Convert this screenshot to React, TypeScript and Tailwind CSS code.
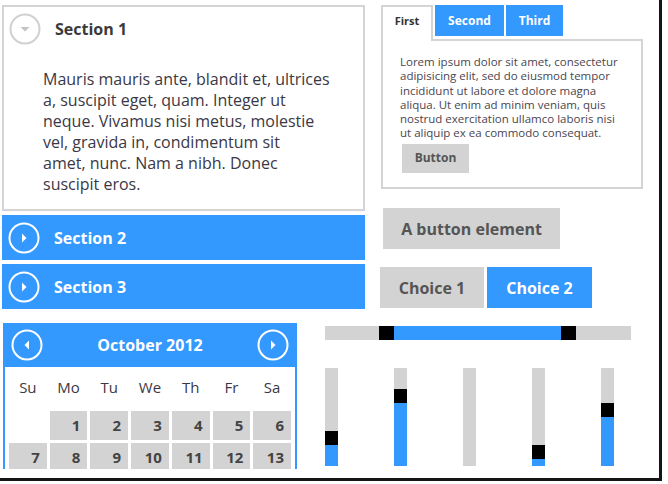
import React from 'react';

const BLUE = 'bg-[#3399ff]';

// small circle with a triangle, used by accordion headers and calendar nav
const CircleArrow = ({ dir, light }: { dir: 'down' | 'right' | 'left'; light?: boolean }) => {
  const stroke = light ? '#ffffff' : '#d0d0d0';
  const fill = light ? '#ffffff' : '#c4c4c4';
  const tri =
    dir === 'down' ? '11.5,14 20.5,14 16,18.5' : dir === 'right' ? '14,11.5 14,20.5 18.5,16' : '18,11.5 18,20.5 13.5,16';
  return (
    <svg width="32" height="32" viewBox="0 0 32 32" className="shrink-0">
      <circle cx="16" cy="16" r="14.5" fill="none" stroke={stroke} strokeWidth="2" />
      <polygon points={tri} fill={fill} />
    </svg>
  );
};

const VSlider = ({ value }: { value: number | null }) => (
  <div className="relative w-[13px] h-[98px] bg-[#d3d3d3]">
    {value !== null && (
      <>
        <div className={`absolute left-0 right-0 bottom-0 ${BLUE}`} style={{ height: value }} />
        <div className="absolute left-0 right-0 h-[14px] bg-black" style={{ bottom: value }} />
      </>
    )}
  </div>
);

const days = ['Su', 'Mo', 'Tu', 'We', 'Th', 'Fr', 'Sa'];
const dates: (number | null)[] = [null, 1, 2, 3, 4, 5, 6, 7, 8, 9, 10, 11, 12, 13];

const sectionLines = [
  'Mauris mauris ante, blandit et, ultrices',
  'a, suscipit eget, quam. Integer ut',
  'neque. Vivamus nisi metus, molestie',
  'vel, gravida in, condimentum sit',
  'amet, nunc. Nam a nibh. Donec',
  'suscipit eros.',
];

const tabLines = [
  'Lorem ipsum dolor sit amet, consectetur',
  'adipisicing elit, sed do eiusmod tempor',
  'incididunt ut labore et dolore magna',
  'aliqua. Ut enim ad minim veniam, quis',
  'nostrud exercitation ullamco laboris nisi',
  'ut aliquip ex ea commodo consequat.',
];

export default function App() {
  return (
    <div
      className="w-[662px] h-[481px] bg-white border-r-[3px] border-b-[3px] border-[#151515] overflow-hidden text-[#3b3845]"
      style={{ fontFamily: '"Open Sans", "Liberation Sans", sans-serif' }}
    >
      {/* top row */}
      <div className="flex pt-[5px]">
        {/* accordion */}
        <div className="ml-[2px] w-[363px] flex flex-col gap-[4px]">
          <div className="h-[206px] border-2 border-[#d4d4d4]">
            <div className="flex items-center h-[43px] pl-[5px] gap-[14px]">
              <CircleArrow dir="down" />
              <span className="font-bold text-[16px] text-[#3a3a3a]">Section 1</span>
            </div>
            <p className="pl-[39px] pt-[19px] text-[16px] leading-[21px] whitespace-nowrap">
              {sectionLines.map((l, i) => (
                <React.Fragment key={i}>
                  {l}
                  {i < sectionLines.length - 1 && <br />}
                </React.Fragment>
              ))}
            </p>
          </div>
          {['Section 2', 'Section 3'].map((s) => (
            <div key={s} className={`h-[45px] ${BLUE} flex items-center pl-[6px] gap-[14px]`}>
              <CircleArrow dir="right" light />
              <span className="font-bold text-[16px] text-white">{s}</span>
            </div>
          ))}
        </div>

        {/* right column */}
        <div className="ml-[15px] flex flex-col">
          <div className="ml-[1px] w-[262px]">
            <div className="flex items-start gap-[2px]">
              <div className="w-[52px] h-[36px] border-2 border-b-0 border-[#d4d4d4] bg-white relative z-10 flex items-center justify-center text-[11px] font-bold text-[#333] pb-[5px]">
                First
              </div>
              <div className={`w-[69px] h-[31px] ${BLUE} flex items-center justify-center text-[12px] font-bold text-white`}>
                Second
              </div>
              <div className={`w-[57px] h-[31px] ${BLUE} flex items-center justify-center text-[12px] font-bold text-white`}>
                Third
              </div>
            </div>
            <div className="-mt-[2px] h-[150px] border-2 border-[#d4d4d4] pl-[17px] pt-[14px]">
              <p className="text-[11.5px] leading-[14.3px] text-[#4a4550] whitespace-nowrap">
                {tabLines.map((l, i) => (
                  <React.Fragment key={i}>
                    {l}
                    {i < tabLines.length - 1 && <br />}
                  </React.Fragment>
                ))}
              </p>
              <div className="mt-[3px] ml-[2px] w-[67px] h-[29px] bg-[#d3d3d3] flex items-center justify-center text-[12px] font-bold text-[#555]">
                Button
              </div>
            </div>
          </div>
          <div className="mt-[19px] ml-[3px] w-[177px] h-[41px] bg-[#d3d3d3] flex items-center justify-center text-[16px] font-bold text-[#555]">
            A button element
          </div>
          <div className="mt-[18px] flex gap-[3px]">
            <div className="w-[104px] h-[41px] bg-[#d3d3d3] flex items-center justify-center text-[16px] font-bold text-[#555]">
              Choice 1
            </div>
            <div className={`w-[105px] h-[41px] ${BLUE} flex items-center justify-center text-[16px] font-bold text-white`}>
              Choice 2
            </div>
          </div>
        </div>
      </div>

      {/* bottom row */}
      <div className="flex mt-[14px]">
        {/* calendar */}
        <div className="ml-[3px] w-[294px] h-[146px] border-x-2 border-[#3399ff] overflow-hidden">
          <div className={`h-[44px] ${BLUE} flex items-center justify-between px-[6px]`}>
            <CircleArrow dir="left" light />
            <span className="font-bold text-[16px] text-white">October 2012</span>
            <CircleArrow dir="right" light />
          </div>
          <div className="grid grid-cols-7 gap-x-[3px] gap-y-[3px] px-[4px]">
            {days.map((d) => (
              <div key={d} className="h-[41px] flex items-center justify-center text-[15px]">
                {d}
              </div>
            ))}
            {dates.map((n, i) =>
              n === null ? (
                <div key={i} className="h-[29px]" />
              ) : (
                <div
                  key={i}
                  className="h-[29px] bg-[#d3d3d3] flex items-center justify-end pr-[7px] text-[15px] font-bold text-[#444]"
                >
                  {n}
                </div>
              )
            )}
          </div>
        </div>

        {/* sliders */}
        <div className="ml-[28px] pt-[3px] flex flex-col">
          <div className="relative w-[306px] h-[14px] bg-[#d3d3d3]">
            <div className={`absolute top-0 bottom-0 left-[54px] w-[197px] ${BLUE}`} />
            <div className="absolute top-0 bottom-0 left-[54px] w-[15px] bg-black" />
            <div className="absolute top-0 bottom-0 left-[236px] w-[15px] bg-black" />
          </div>
          <div className="mt-[28px] flex gap-[56px]">
            <VSlider value={21} />
            <VSlider value={63} />
            <VSlider value={null} />
            <VSlider value={7} />
            <VSlider value={49} />
          </div>
        </div>
      </div>
    </div>
  );
}
